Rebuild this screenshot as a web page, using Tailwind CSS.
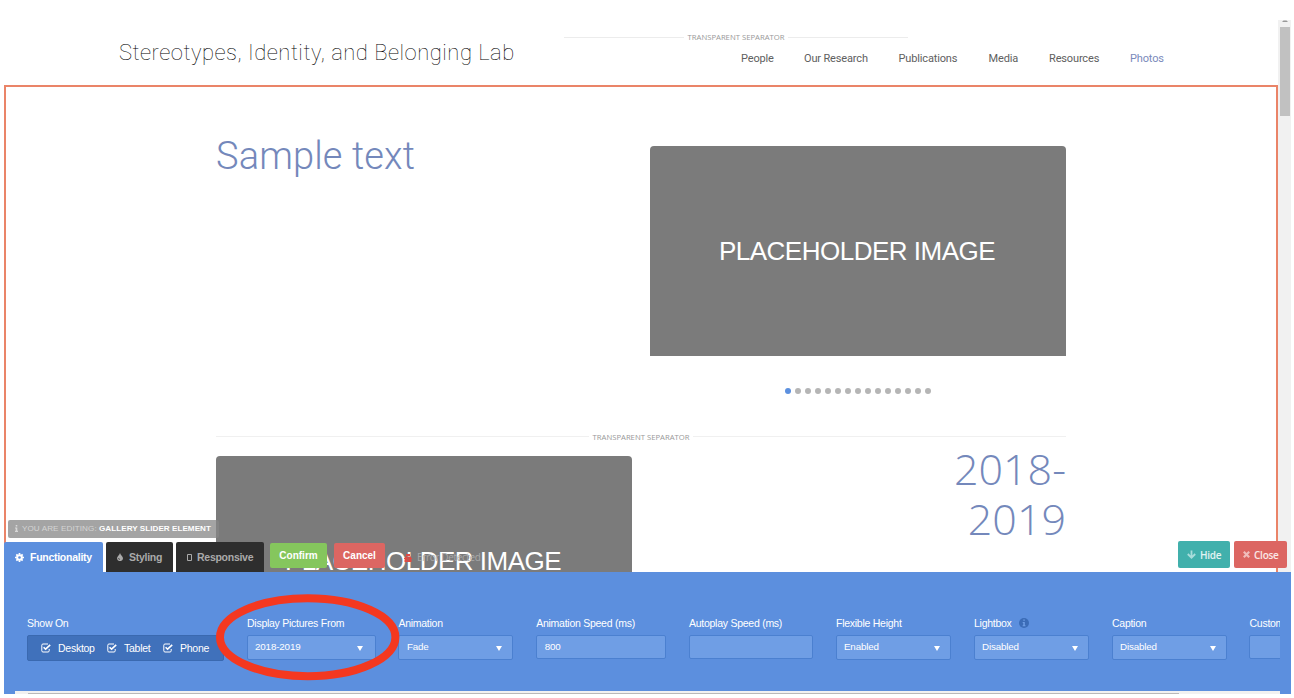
<!DOCTYPE html>
<html lang="en">
<head>
<meta charset="utf-8">
<title>Stereotypes, Identity, and Belonging Lab</title>
<script src="https://cdn.jsdelivr.net/npm/@tailwindcss/browser@4"></script>
</head>
<body class="bg-white">
<div class="relative flex h-[698px] w-[1294px] flex-col overflow-hidden bg-white font-['Liberation_Sans',sans-serif]">

  <!-- Site page -->
  <div class="flex h-[572px] shrink-0 overflow-hidden pl-1">
    <div class="flex w-[1274px] shrink-0 flex-col">
      <header class="flex h-[85px] shrink-0 pl-[115px] font-[Roboto,sans-serif]">
        <h1 class="w-[445px] shrink-0 pt-[38px] text-[22px] leading-[30px] font-thin tracking-[0.51px] whitespace-nowrap text-black">Stereotypes, Identity, and Belonging Lab</h1>
        <div class="flex flex-col pt-[32px]">
          <div class="flex h-[10px] w-[344px] items-center gap-1 font-['Open_Sans',sans-serif] text-[7.7px] leading-[10px] text-[#999]">
            <span class="h-px flex-1 bg-[#ececec]"></span><span class="whitespace-nowrap">TRANSPARENT SEPARATOR</span><span class="h-px flex-1 bg-[#ececec]"></span>
          </div>
          <nav class="grid grid-cols-[63px_94.5px_90px_60.5px_81px_40px] pt-[10px] pl-[177px] text-[11px] leading-[14px] tracking-[-0.15px] whitespace-nowrap text-[#606060]">
            <a>People</a><a>Our Research</a><a>Publications</a><a>Media</a><a>Resources</a><a class="text-[#7a8abb]">Photos</a>
          </nav>
        </div>
      </header>
      <main class="flex h-[520px] shrink-0 flex-col border-2 border-[#ea8468] pr-[210px] pl-[210px]">
        <section class="flex h-[344px] shrink-0 justify-between">
          <h2 class="pt-[43px] font-[Roboto,sans-serif] text-[38px] leading-[52px] font-light tracking-[0.12px] text-[#7488bb]">Sample text</h2>
          <div class="flex w-[416px] flex-col items-center pt-[59px]">
            <div class="flex h-[210px] w-full items-center justify-center rounded-t-[4px] bg-[#7b7b7b] pr-[2px] text-[26px] tracking-[-0.5px] text-white">PLACEHOLDER IMAGE</div>
            <div class="flex gap-1 pt-[32px]">
              <i class="size-[6px] rounded-full bg-[#5c90df]"></i><i class="size-[6px] rounded-full bg-[#b5b5b5]"></i><i class="size-[6px] rounded-full bg-[#b5b5b5]"></i><i class="size-[6px] rounded-full bg-[#b5b5b5]"></i><i class="size-[6px] rounded-full bg-[#b5b5b5]"></i><i class="size-[6px] rounded-full bg-[#b5b5b5]"></i><i class="size-[6px] rounded-full bg-[#b5b5b5]"></i><i class="size-[6px] rounded-full bg-[#b5b5b5]"></i><i class="size-[6px] rounded-full bg-[#b5b5b5]"></i><i class="size-[6px] rounded-full bg-[#b5b5b5]"></i><i class="size-[6px] rounded-full bg-[#b5b5b5]"></i><i class="size-[6px] rounded-full bg-[#b5b5b5]"></i><i class="size-[6px] rounded-full bg-[#b5b5b5]"></i><i class="size-[6px] rounded-full bg-[#b5b5b5]"></i><i class="size-[6px] rounded-full bg-[#b5b5b5]"></i>
            </div>
          </div>
        </section>
        <div class="flex h-[11px] shrink-0 items-center gap-1 font-['Open_Sans',sans-serif] text-[7.7px] leading-[11px] text-[#999]">
          <span class="h-px flex-1 bg-[#f0f0f0]"></span><span class="pt-[2px] whitespace-nowrap">TRANSPARENT SEPARATOR</span><span class="h-px flex-1 bg-[#f0f0f0]"></span>
        </div>
        <section class="flex shrink-0 justify-between">
          <div class="mt-[14px] flex h-[210px] w-[416px] items-center justify-center rounded-t-[4px] bg-[#7b7b7b] pr-[2px] text-[26px] tracking-[-0.5px] text-white">PLACEHOLDER IMAGE</div>
          <h2 class="w-[140px] pt-[2px] text-right font-['Open_Sans',sans-serif] text-[43px] leading-[50px] font-light text-[#7488bb]">2018-<br>2019</h2>
        </section>
      </main>
    </div>
    <!-- Page scrollbar -->
    <div class="mt-[20px] flex w-[13px] shrink-0 flex-col items-center bg-[#f1f1f1]">
      <svg class="h-[7px] w-[6px] shrink-0" viewBox="0 0 6 7"><path d="M0 2h6L4.5 .5h-3z" fill="#999"/></svg>
      <div class="h-[89px] w-[10px] bg-[#c1c1c1]"></div>
    </div>
  </div>

  <!-- Settings panel -->
  <section class="mx-1 mr-[3px] flex h-[122px] shrink-0 flex-col bg-[#5c8fde] pr-[11px] text-[10.5px] tracking-[-0.26px] text-white">
    <div class="flex h-[119px] shrink-0 overflow-hidden pt-[44px] pl-[23px] whitespace-nowrap">
      <div class="mr-[23px] w-[197px] shrink-0">
        <div class="mb-[5px] h-[14px] leading-[14px]">Show On</div>
        <div class="flex h-[26px] items-center rounded-[2px] border border-[#3a69b0] bg-[#4071bb] pl-[13px]">
          <svg class="mr-[7px] size-[10px]" viewBox="0 0 10 10" fill="none" stroke="white"><path d="M7 1H2Q.8 1 .8 2.2V7.8Q.8 9 2 9H7Q8.2 9 8.2 7.8V6" stroke-width="1"/><path d="M2.6 4.2l2 2L9.2 1.8" stroke-width="1.6"/></svg><span class="w-[49px] pt-px">Desktop</span>
          <svg class="mr-[7px] size-[10px]" viewBox="0 0 10 10" fill="none" stroke="white"><path d="M7 1H2Q.8 1 .8 2.2V7.8Q.8 9 2 9H7Q8.2 9 8.2 7.8V6" stroke-width="1"/><path d="M2.6 4.2l2 2L9.2 1.8" stroke-width="1.6"/></svg><span class="w-[39px] pt-px">Tablet</span>
          <svg class="mr-[7px] size-[10px]" viewBox="0 0 10 10" fill="none" stroke="white"><path d="M7 1H2Q.8 1 .8 2.2V7.8Q.8 9 2 9H7Q8.2 9 8.2 7.8V6" stroke-width="1"/><path d="M2.6 4.2l2 2L9.2 1.8" stroke-width="1.6"/></svg><span class="pt-px">Phone</span>
        </div>
      </div>
      <div class="mr-[22.4px] w-[129px] shrink-0">
        <div class="mb-[5px] h-[14px] leading-[14px]">Display Pictures From</div>
        <div class="flex h-[25px] items-center justify-between rounded-[2px] border border-[#4b80d0] bg-[#6f9ee5] pr-[12px] pl-[7px] text-[9.8px] tracking-[-0.15px]"><span>2018-2019</span><svg class="mt-px h-[5px] w-[6px]" viewBox="0 0 6 5"><path d="M0 0h6L3 5z" fill="white"/></svg></div>
      </div>
      <div class="mr-[22.8px] w-[115px] shrink-0">
        <div class="mb-[5px] h-[14px] leading-[14px]">Animation</div>
        <div class="flex h-[25px] items-center justify-between rounded-[2px] border border-[#4b80d0] bg-[#6f9ee5] pr-[10px] pl-[7.500px] text-[9.8px] tracking-[-0.15px]"><span>Fade</span><svg class="mt-px h-[5px] w-[6px]" viewBox="0 0 6 5"><path d="M0 0h6L3 5z" fill="white"/></svg></div>
      </div>
      <div class="mr-[23.300px] w-[129.500px] shrink-0">
        <div class="mb-[5px] h-[14px] leading-[14px]">Animation Speed (ms)</div>
        <div class="flex h-[24px] items-center rounded-[2px] border border-[#4b80d0] bg-[#6f9ee5] pl-[7.500px] text-[9.8px] tracking-[-0.15px]">800</div>
      </div>
      <div class="mr-[23px] w-[124px] shrink-0">
        <div class="mb-[5px] h-[14px] leading-[14px]">Autoplay Speed (ms)</div>
        <div class="h-[24px] rounded-[2px] border border-[#4b80d0] bg-[#6f9ee5]"></div>
      </div>
      <div class="mr-[23px] w-[115px] shrink-0">
        <div class="mb-[5px] h-[14px] leading-[14px]">Flexible Height</div>
        <div class="flex h-[25px] items-center justify-between rounded-[2px] border border-[#4b80d0] bg-[#6f9ee5] pr-[10px] pl-[7px] text-[9.8px] tracking-[-0.15px]"><span>Enabled</span><svg class="mt-px h-[5px] w-[6px]" viewBox="0 0 6 5"><path d="M0 0h6L3 5z" fill="white"/></svg></div>
      </div>
      <div class="mr-[23px] w-[115px] shrink-0">
        <div class="mb-[5px] flex h-[14px] items-center leading-[14px]"><span class="w-[45px]">Lightbox</span><svg class="size-[10px]" viewBox="0 0 10 10"><circle cx="5" cy="5" r="5" fill="#3b6cb7"/><path d="M4.3 1.5h1.5v1.3H4.3zM3.7 4h2.1v3.3h.7v1H3.6v-1h.7V5h-.6z" fill="#6f9ee5"/></svg></div>
        <div class="flex h-[25px] items-center justify-between rounded-[2px] border border-[#4b80d0] bg-[#6f9ee5] pr-[10px] pl-[7px] text-[9.8px] tracking-[-0.15px]"><span>Disabled</span><svg class="mt-px h-[5px] w-[6px]" viewBox="0 0 6 5"><path d="M0 0h6L3 5z" fill="white"/></svg></div>
      </div>
      <div class="mr-[22.500px] w-[115px] shrink-0">
        <div class="mb-[5px] h-[14px] leading-[14px]">Caption</div>
        <div class="flex h-[25px] items-center justify-between rounded-[2px] border border-[#4b80d0] bg-[#6f9ee5] pr-[10px] pl-[7px] text-[9.8px] tracking-[-0.15px]"><span>Disabled</span><svg class="mt-px h-[5px] w-[6px]" viewBox="0 0 6 5"><path d="M0 0h6L3 5z" fill="white"/></svg></div>
      </div>
      <div class="w-[115px] shrink-0">
        <div class="mb-[5px] h-[14px] leading-[14px]">Custom</div>
        <div class="h-[24px] rounded-[2px] border border-[#4b80d0] bg-[#6f9ee5]"></div>
      </div>
    </div>
    <div class="ml-[11px] h-[3px] bg-[#f1f1f1] pt-[2px] pl-[13px]"><div class="h-px w-[1151px] bg-[#b9b9b9]"></div></div>
  </section>

  <!-- Editor controls over the page -->
  <div class="absolute top-[520px] left-[8px] flex h-[17.5px] w-[211px] items-center rounded-[2px] bg-[#868686]/75 pl-[7px] text-[8.1px] whitespace-nowrap text-[#d4d4d4]">
    <svg class="mr-[4px] h-[7px] w-[3px]" viewBox="0 0 3 7"><path d="M.7 0h1.6v1.6H.7zM0 2.5h2.3v3.3H3V7H0V5.8h.7V3.6H0z" fill="#d8d8d8"/></svg>
    <span class="w-[77px] tracking-[0.09px]">YOU ARE EDITING:</span><b class="tracking-[0.04px] text-white">GALLERY SLIDER ELEMENT</b>
  </div>
  <div class="absolute top-[542px] left-1 flex h-[30px] gap-[3px] text-[10.5px] font-bold tracking-[-0.27px] whitespace-nowrap text-[#aaa]">
    <div class="flex w-[99px] items-center rounded-t-[2px] bg-[#5c8fde] pl-[11px] text-white">
      <svg class="mr-[6px] size-[9px]" viewBox="0 0 10 10"><circle cx="5" cy="5" r="2.6" fill="none" stroke="white" stroke-width="2.2"/><path d="M5 0v2M5 8v2M0 5h2M8 5h2M1.5 1.5l1.4 1.4M7.1 7.1l1.4 1.4M8.5 1.5L7.1 2.9M2.9 7.1L1.5 8.5" stroke="white" stroke-width="1.9"/></svg><span class="pt-px">Functionality</span>
    </div>
    <div class="flex w-[67px] items-center rounded-t-[2px] bg-[#2e2e2e] pl-[11px]">
      <svg class="mr-[6px] h-[8px] w-[6px]" viewBox="0 0 6 8"><path d="M3 0C3.500 2 6 3.500 6 5.300A2.900 2.700 0 0 1 0 5.300C0 3.500 2.500 2 3 0z" fill="#aaa"/><path d="M1.600 5.200q0 1.200 1.200 1.200" stroke="#2e2e2e" stroke-width=".8" fill="none"/></svg><span class="pt-px">Styling</span>
    </div>
    <div class="flex w-[88px] items-center rounded-t-[2px] bg-[#2e2e2e] pl-[11px]">
      <svg class="mr-[5px] h-[7px] w-[5px]" viewBox="0 0 5 7"><path d="M.5 .5h4v6h-4z" fill="none" stroke="#aaa"/></svg><span class="pt-px">Responsive</span>
    </div>
  </div>
  <div class="absolute top-[543px] left-[270px] flex h-[25px] text-[10px] font-bold whitespace-nowrap text-white">
    <div class="mr-[7px] flex w-[57px] items-center justify-center rounded-[2px] bg-[#85c65d]">Confirm</div>
    <div class="mr-[19px] flex w-[51px] items-center justify-center rounded-[2px] bg-[#dc6662]">Cancel</div>
    <div class="flex items-center pt-[3px] font-['Open_Sans',sans-serif] text-[10px] font-normal tracking-[-0.36px] text-[#a9a9a9]">
      <svg class="mr-[5px] h-[9px] w-[8px]" viewBox="0 0 8 9"><path d="M1 3.500h6V9H1zM0 5h8v1.200H0zM0 7.500h8v1H0zM2 1h4v2H2z" fill="#e04a44"/><path d="M4 4v4.500" stroke="#7b7b7b" stroke-width=".6"/></svg>Error Detected
    </div>
  </div>
  <div class="absolute top-[541px] left-[1178px] flex h-[27px] gap-1 font-['Open_Sans',sans-serif] text-[10px] font-semibold tracking-[-0.25px] whitespace-nowrap text-white/85">
    <div class="flex w-[52px] items-center rounded-[2px] bg-[#41b0ac] pl-[9px]">
      <svg class="mr-[4px] size-[9px]" viewBox="0 0 9 9" fill="none" stroke="#a9dddb" stroke-width="1.8"><path d="M4.500 .5V7.500M.8 4l3.700 3.700L8.200 4"/></svg><span class="pt-px">Hide</span>
    </div>
    <div class="flex w-[53px] items-center rounded-[2px] bg-[#dc6662] pl-[9px]">
      <svg class="mr-[4px] size-[7px]" viewBox="0 0 7 7" stroke="#f0bdbb" stroke-width="2.2"><path d="M.8 .8l5.400 5.400M6.200 .8L.8 6.200"/></svg><span class="pt-px">Close</span>
    </div>
  </div>

  <!-- Highlight ring -->
  <svg class="absolute top-[590px] left-[212px] h-[94px] w-[192px]" viewBox="0 0 192 94"><ellipse cx="95.700" cy="47.200" rx="87.700" ry="39" fill="none" stroke="#f43820" stroke-width="8"/></svg>
</div>
</body>
</html>
